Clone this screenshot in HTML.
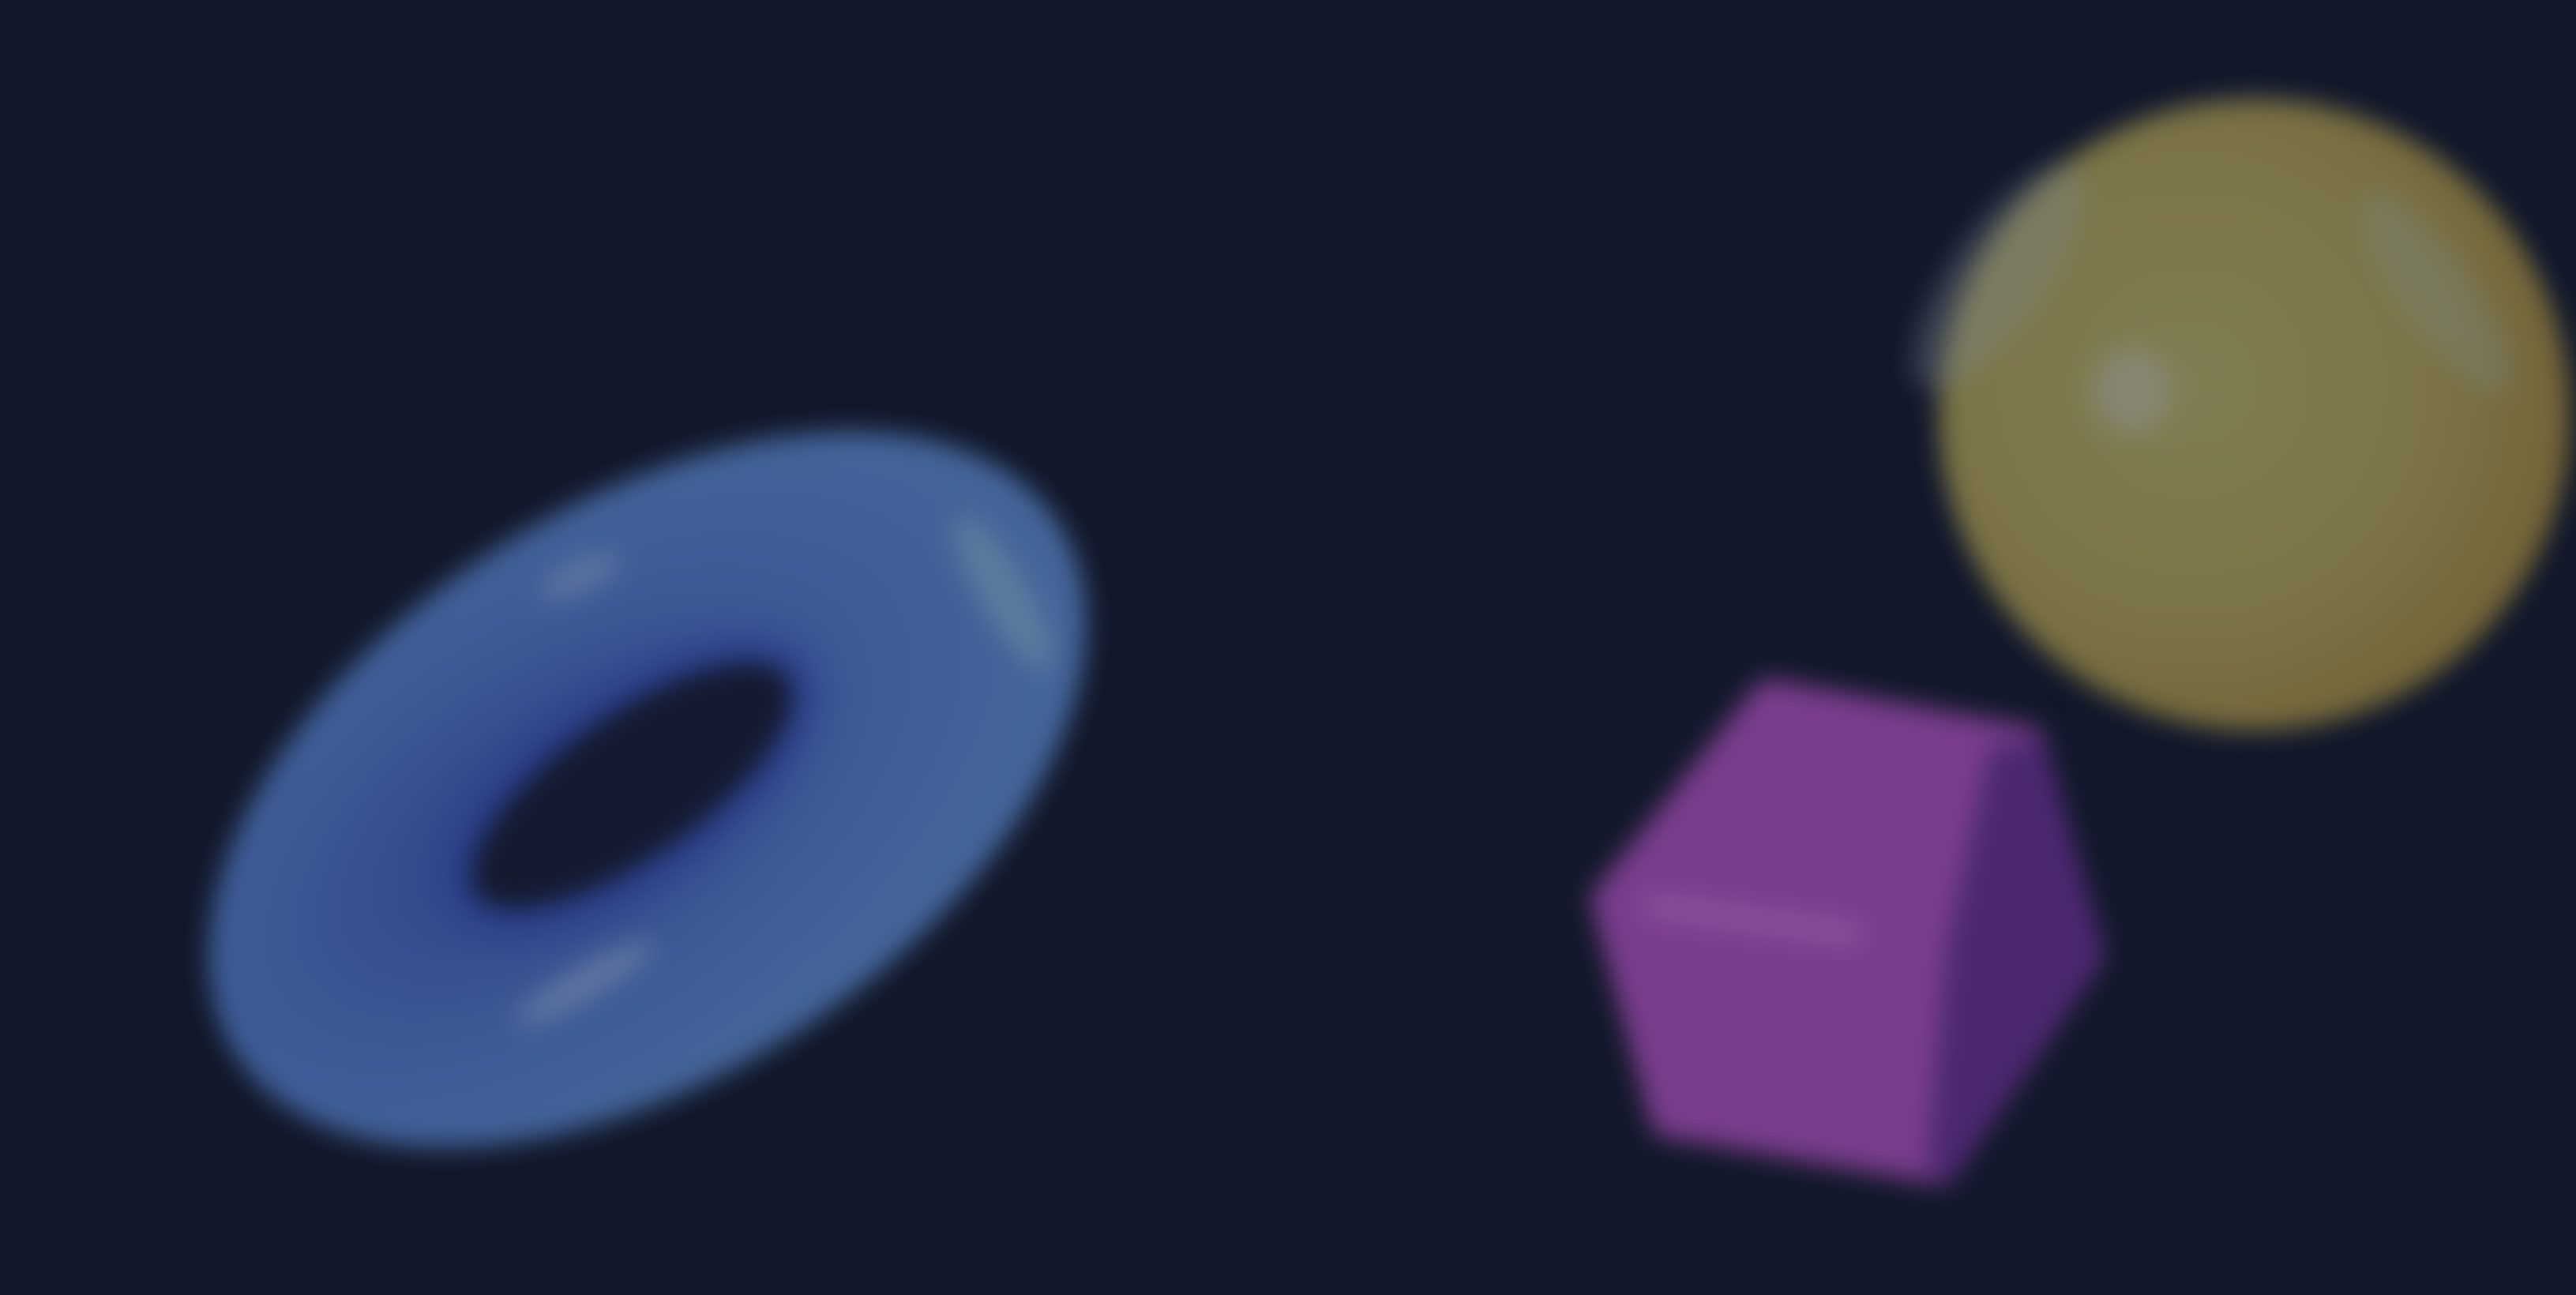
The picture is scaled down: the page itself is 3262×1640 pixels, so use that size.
<!DOCTYPE html>
<html><head><style>
html,body{margin:0;padding:0;width:3262px;height:1576px;overflow:hidden;background:#12182b;}
.s{position:absolute;}
</style></head><body>
<div class="s" style="left:0;top:0;width:3262px;height:1576px;filter:blur(16px);">
  <!-- torus -->
  <div class="s" style="left:200px;top:640px;width:1240px;height:720px;border-radius:50%;transform:rotate(-33deg);background:radial-gradient(ellipse at 40% 45%, #2d3f86 0%, #3d5a96 40%, #45669a 70%, #34488a 100%);"></div>
  <div class="s" style="left:560px;top:905px;width:480px;height:180px;border-radius:50%;transform:rotate(-35deg);background:#141a30;box-shadow:0 0 40px 30px #2a3c8a;"></div>
  <div class="s" style="left:640px;top:1225px;width:200px;height:40px;border-radius:50%;transform:rotate(-30deg);background:#7a8aa8;opacity:.6;"></div>
  <div class="s" style="left:680px;top:710px;width:110px;height:40px;border-radius:50%;transform:rotate(-25deg);background:#7a8aa8;opacity:.5;"></div>
  <div class="s" style="left:1240px;top:640px;width:60px;height:220px;border-radius:50%;transform:rotate(-30deg);background:#6d8ea0;opacity:.6;"></div>
  <!-- sphere -->
  <div class="s" style="left:2455px;top:125px;width:800px;height:800px;border-radius:50%;background:radial-gradient(circle at 40% 45%, #807e52 0%, #7c7548 45%, #736437 75%, #5f6a40 100%);"></div>
  <div class="s" style="left:2650px;top:440px;width:100px;height:110px;border-radius:50%;background:#8a8a80;opacity:.7;"></div>
  <div class="s" style="left:2470px;top:180px;width:120px;height:340px;border-radius:50%;transform:rotate(35deg);background:#7e8a92;opacity:.35;"></div>
  <div class="s" style="left:3040px;top:220px;width:90px;height:300px;border-radius:50%;transform:rotate(-35deg);background:#7e8a92;opacity:.3;"></div>
  <!-- cube -->
  <svg class="s" style="left:0;top:0" width="3262" height="1576">
    <polygon points="2240,880 2570,940 2645,1206 2460,1480 2110,1420 2035,1140" fill="#7a3d8c" stroke="#7a3d8c" stroke-width="40" stroke-linejoin="round"/>
    <polygon points="2520,945 2590,935 2665,1206 2470,1500 2440,1480 2465,1200" fill="#4b2870"/>
    <rect x="2080" y="1150" width="280" height="30" rx="15" fill="#9a6aa8" opacity=".5" transform="rotate(8 2220 1165)"/>
  </svg>
</div>
</body></html>
